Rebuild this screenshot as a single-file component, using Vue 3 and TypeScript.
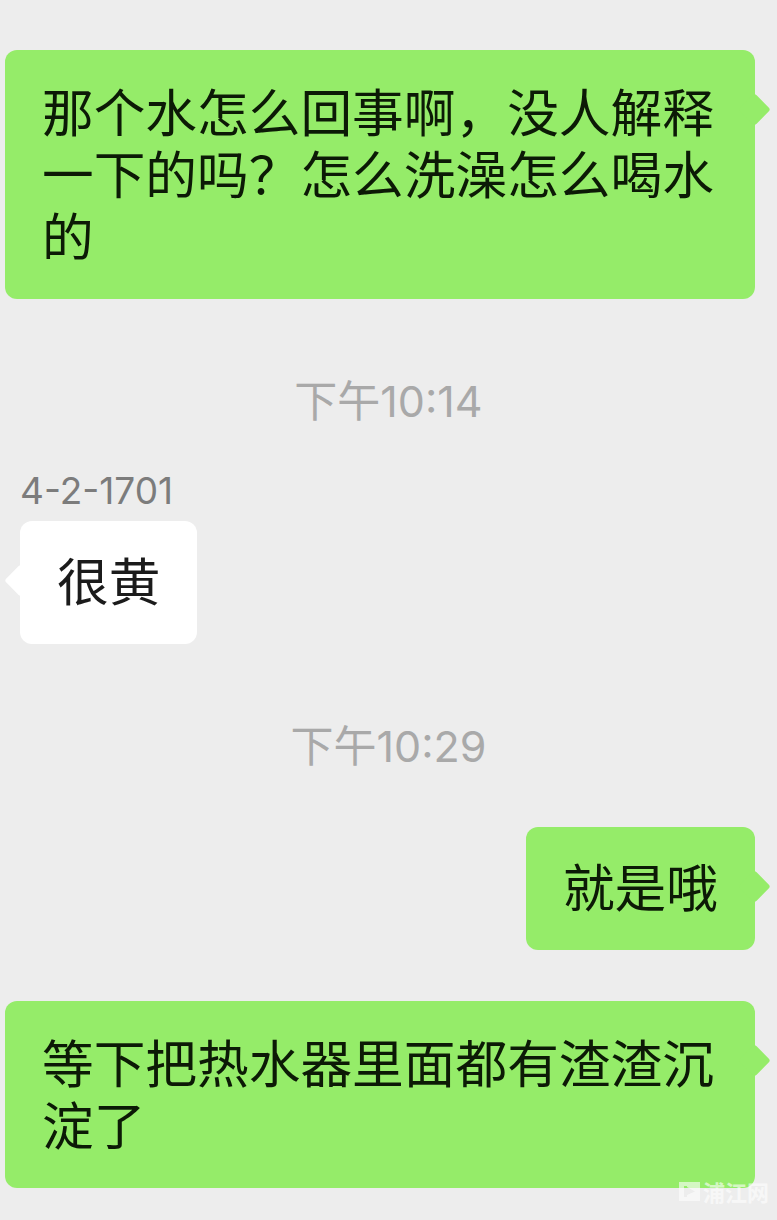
<script setup lang="ts">
type Row =
  | { kind: 'time'; text: string }
  | { kind: 'msg'; text: string; side: 'me' | 'other'; name?: string; wide?: boolean }

const rows: Row[] = [
  { kind: 'msg', side: 'me', wide: true, text: '那个水怎么回事啊，没人解释一下的吗？怎么洗澡怎么喝水的' },
  { kind: 'time', text: '下午10:14' },
  { kind: 'msg', side: 'other', name: '4-2-1701', text: '很黄' },
  { kind: 'time', text: '下午10:29' },
  { kind: 'msg', side: 'me', text: '就是哦' },
  { kind: 'msg', side: 'me', wide: true, text: '等下把热水器里面都有渣渣沉淀了' },
]
</script>

<template>
  <div class="chat">
    <template v-for="(row, i) in rows" :key="i">
      <div v-if="row.kind === 'time'" class="time">{{ row.text }}</div>
      <div v-else class="row" :class="row.side">
        <div v-if="row.name" class="name">{{ row.name }}</div>
        <div class="bubble" :class="{ wide: row.wide }">{{ row.text }}</div>
      </div>
    </template>
    <div class="mark">
      <svg width="21" height="21" viewBox="0 0 21 21">
        <path d="M0 1h21v19H0z M5 5v11h3v-2l8-3.5L8 6V5z" fill="#fff" fill-rule="evenodd" />
      </svg>
      <span>浦江网</span>
    </div>
  </div>
</template>

<style scoped>
.chat {
  position: relative;
  width: 777px;
  height: 1220px;
  overflow: hidden;
  box-sizing: border-box;
  padding: 50px 22px 0 5px;
  display: flex;
  flex-direction: column;
  background: #ededed;
  font-family: "Noto Sans CJK SC", "Noto Sans", sans-serif;
}

.time {
  height: 40px;
  line-height: 40px;
  margin: 82px -17px 0 0;
  text-align: center;
  font-size: 43px;
  color: #a9a9a9;
  font-family: Inter, "Noto Sans CJK SC", sans-serif;
}

.row {
  display: flex;
  flex-direction: column;
}

.row.me {
  align-items: flex-end;
}

.time + .row.me {
  margin-top: 61px;
}

.row.me + .row.me {
  margin-top: 51px;
}

.row.other {
  align-items: flex-start;
  padding-left: 15px;
  margin-top: 47px;
}

.name {
  height: 46px;
  margin-bottom: 7px;
  line-height: 46px;
  font-size: 37px;
  color: #7c7c7c;
  font-family: Inter, sans-serif;
}

.bubble {
  position: relative;
  box-sizing: border-box;
  padding: 27px 37px 34px;
  border-radius: 12px;
  font-size: 51.7px;
  line-height: 62px;
  color: #0c1a06;
  background: #95ec69;
}

.bubble.wide {
  width: 750px;
  padding-top: 29px;
  padding-bottom: 34px;
}

.bubble::after {
  content: "";
  position: absolute;
  top: 48px;
  width: 23px;
  height: 23px;
  border-radius: 3px;
  background: inherit;
  transform: rotate(45deg);
}

.me .bubble::after {
  right: -11px;
}

.other .bubble {
  color: #1b1b1b;
  background: #fff;
}

.other .bubble::after {
  left: -11px;
}

.mark {
  position: absolute;
  left: 679px;
  top: 1181px;
  display: flex;
  align-items: center;
  gap: 3px;
  opacity: 0.6;
  font-size: 22px;
  font-weight: 700;
  line-height: 21px;
  color: #fff;
}
</style>

<style>
html, body {
  background: #ededed;
}
</style>
